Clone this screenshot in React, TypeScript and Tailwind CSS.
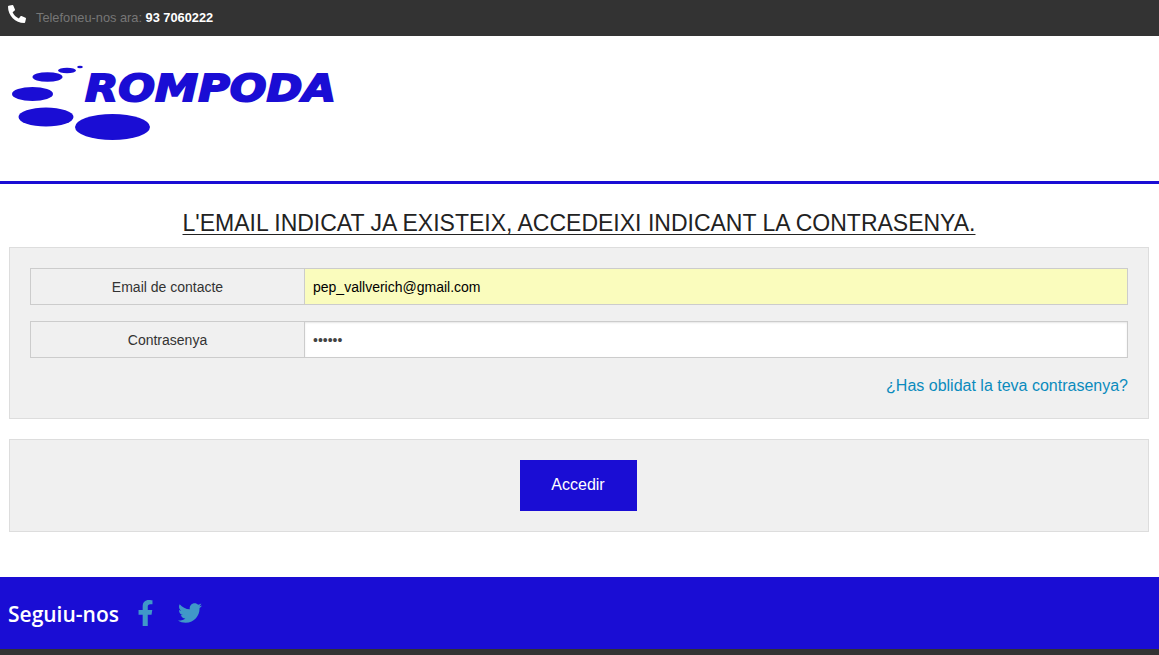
import { FaPhone, FaFacebookF, FaTwitter } from "react-icons/fa";

function Logo() {
  return (
    <svg width="340" height="110" viewBox="0 0 340 110" className="block">
      <g fill="#1a0dd4">
        <ellipse cx="80" cy="31" rx="2.8" ry="1.2" />
        <ellipse cx="67" cy="34.5" rx="9" ry="2.8" />
        <ellipse cx="47.5" cy="41" rx="15" ry="4.8" />
        <ellipse cx="32.5" cy="58" rx="20.5" ry="7" />
        <ellipse cx="46" cy="81" rx="27.5" ry="9.5" />
        <ellipse cx="112.5" cy="91" rx="37.5" ry="13" />
        <text
          x="85"
          y="65"
          textLength="251"
          lengthAdjust="spacingAndGlyphs"
          fontFamily="'DejaVu Sans', Arial, sans-serif"
          fontSize="37"
          fontWeight="700"
          fontStyle="italic"
          stroke="#1a0dd4"
          strokeWidth="1.8"
        >
          ROMPODA
        </text>
      </g>
    </svg>
  );
}

export default function App() {
  return (
    <div className="font-['Liberation_Sans',Arial,sans-serif] bg-white text-[#333]">
      <div className="h-9 bg-[#333333] flex items-start pl-2">
        <FaPhone className="w-[18px] h-[18px] mt-[5px] text-white -scale-x-100" />
        <p className="ml-[10px] mt-[10px] text-[12.8px] leading-[15px] text-[#777777]">
          Telefoneu-nos ara: <strong className="text-white">93 7060222</strong>
        </p>
      </div>

      <header className="h-[148px] border-b-[3px] border-[#1a0dd4] overflow-hidden">
        <Logo />
      </header>

      <main className="pl-[9px] pr-[10px] pt-[25px]">
        <h1 className="text-center text-[23px] leading-[28px] font-normal text-[#222222] underline underline-offset-[3px] decoration-1 mb-[10px] uppercase">
          L'email indicat ja existeix, accedeixi indicant la contrasenya.
        </h1>

        <section className="h-[172px] border border-[#dddddd] bg-[#f0f0f0] px-5 pt-5">
          <div className="flex h-[37px] border border-[#cccccc]">
            <div className="w-[274px] shrink-0 border-r border-[#cccccc] flex items-center justify-center text-sm">
              Email de contacte
            </div>
            <div className="flex-1 bg-[#fafcbd] flex items-center pl-2 text-sm text-black">
              pep_vallverich@gmail.com
            </div>
          </div>
          <div className="flex h-[37px] border border-[#cccccc] mt-4">
            <div className="w-[274px] shrink-0 border-r border-[#cccccc] flex items-center justify-center text-sm">
              Contrasenya
            </div>
            <div className="flex-1 bg-white flex items-center pl-2 text-sm text-[#444444] shadow-[inset_0_1px_2px_rgba(0,0,0,0.1)]">
              ••••••
            </div>
          </div>
          <div className="text-right mt-4">
            <a href="#" className="text-base leading-[20px] text-[#0a8bbd]">
              ¿Has oblidat la teva contrasenya?
            </a>
          </div>
        </section>

        <section className="mt-5 h-[93px] border border-[#dddddd] bg-[#f0f0f0] flex justify-center pt-5">
          <button className="w-[117px] h-[51px] mr-[2px] pb-[2px] bg-[#1a0dd4] text-white text-base">Accedir</button>
        </section>
      </main>

      <footer className="mt-[45px] h-[72px] bg-[#1a0dd4] flex items-center pl-2">
        <span className="font-['Open_Sans',sans-serif] font-semibold text-[21px] leading-[28px] mt-[2px] text-white">Seguiu-nos</span>
        <FaFacebookF className="ml-[17px] w-[19px] h-[26px] text-[#4098c8]" />
        <FaTwitter className="ml-[23px] w-6 h-6 text-[#4098c8]" />
      </footer>
      <div className="h-[6px] bg-[#333333]" />
    </div>
  );
}
